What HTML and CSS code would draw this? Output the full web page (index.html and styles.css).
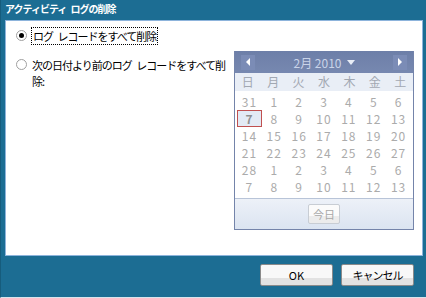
FILE: index.html
```html
<!DOCTYPE html>
<html lang="ja">
<head>
    <meta charset="UTF-8">
    <title>アクティビティ ログの削除</title>
    <link rel="stylesheet" href="styles.css">
</head>
<body>
    <div class="dialog">
        <div class="title">アクティビティ ログの削除</div>
        <div class="panel">
            <label class="option first">
                <span class="radio checked"></span>
                <span class="focus">ログ レコードをすべて削除</span>
            </label>
            <div class="row">
                <label class="option second">
                    <span class="radio"></span>
                    <span>次の日付より前のログ レコードをすべて削除:</span>
                </label>
                <div class="calendar">
                    <div class="cal-head">
                        <span class="nav"><svg width="6" height="8" viewBox="0 0 6 8"><path d="M5 0 L1 4 L5 8 Z" fill="#fff"/></svg></span>
                        <span class="month">2月 2010 <svg width="8" height="5" viewBox="0 0 8 5"><path d="M0 0 H8 L4 5 Z" fill="#e8edf6"/></svg></span>
                        <span class="nav"><svg width="6" height="8" viewBox="0 0 6 8"><path d="M1 0 L5 4 L1 8 Z" fill="#fff"/></svg></span>
                    </div>
                    <div class="days">
                        <span>日</span><span>月</span><span>火</span><span>水</span><span>木</span><span>金</span><span>土</span>
                    </div>
                    <div class="dates">
                        <span>31</span><span>1</span><span>2</span><span>3</span><span>4</span><span>5</span><span>6</span>
                        <span class="sel">7</span><span>8</span><span>9</span><span>10</span><span>11</span><span>12</span><span>13</span>
                        <span>14</span><span>15</span><span>16</span><span>17</span><span>18</span><span>19</span><span>20</span>
                        <span>21</span><span>22</span><span>23</span><span>24</span><span>25</span><span>26</span><span>27</span>
                        <span>28</span><span>1</span><span>2</span><span>3</span><span>4</span><span>5</span><span>6</span>
                        <span>7</span><span>8</span><span>9</span><span>10</span><span>11</span><span>12</span><span>13</span>
                    </div>
                    <div class="cal-foot">
                        <span class="today">今日</span>
                    </div>
                </div>
            </div>
        </div>
        <div class="buttons">
            <button class="btn">OK</button>
            <button class="btn jp">キャンセル</button>
        </div>
    </div>
</body>
</html>
```

FILE: styles.css
```css
body {
    margin: 0;
    font-family: "Noto Sans CJK JP", "DejaVu Sans", sans-serif;
    font-size: 11px;
}
.dialog {
    width: 426px;
    height: 298px;
    box-sizing: border-box;
    background-color: #1c6d93;
    border-left: 1px solid #165c7c;
    border-bottom: 1px solid #d8e4ec;
    display: flex;
    flex-direction: column;
}
.title {
    height: 20px;
    line-height: 18px;
    padding-left: 4px;
    color: #fff;
    font-weight: bold;
    font-size: 10px;
    letter-spacing: -1px;
    word-spacing: 3px;
}
.panel {
    margin: 0 3px 0 4px;
    height: 236px;
    box-sizing: border-box;
    background-color: #fff;
    border: 1px solid #8db4dc;
    padding: 6px 0 0 10px;
}
.option {
    display: flex;
    align-items: flex-start;
    gap: 5px;
    color: #000;
    line-height: 16px;
    letter-spacing: -1px;
    word-spacing: 3px;
}
.option.first {
    margin-top: 1px;
}
.focus {
    outline: 1px dotted #000;
    padding: 0 1px;
}
.radio {
    width: 11px;
    height: 11px;
    box-sizing: border-box;
    border-radius: 50%;
    border: 1px solid #a0a0a0;
    background: #fff;
    margin-top: 2px;
    flex: none;
    display: flex;
    align-items: center;
    justify-content: center;
}
.radio.checked::after {
    content: "";
    width: 5px;
    height: 5px;
    border-radius: 50%;
    background: #000;
}
.row {
    display: flex;
    margin-top: 7px;
}
.option.second {
    width: 212px;
    margin-top: 6px;
}
.calendar {
    margin-left: 6px;
    width: 178px;
    border: 1px solid #7484aa;
    border-top: none;
    background: #fff;
}
.cal-head {
    height: 22px;
    background: linear-gradient(#6d7fa8, #7788b0);
    display: flex;
    align-items: center;
    justify-content: space-between;
    padding: 0 6px;
}
.nav {
    width: 14px;
    height: 15px;
    background: #7b8cb6;
    display: flex;
    align-items: center;
    justify-content: center;
}
.month {
    color: #c9d3e8;
    font-size: 12px;
    display: flex;
    align-items: center;
    gap: 5px;
}
.days {
    display: grid;
    grid-template-columns: repeat(7, 1fr);
    background: #e9eef6;
    height: 18px;
    line-height: 18px;
    text-align: center;
    color: #a2a8b2;
    font-size: 12px;
}
.dates {
    display: grid;
    grid-template-columns: repeat(7, 1fr);
    grid-auto-rows: 17px;
    padding: 2px 2px 3px;
    text-align: center;
    color: #ababab;
    line-height: 17px;
    font-size: 12px;
    letter-spacing: 1px;
}
.dates .sel {
    background: #e3eaf5;
    border: 1px solid #c05050;
    line-height: 15px;
    color: #909090;
    font-weight: bold;
}
.cal-foot {
    height: 30px;
    background: linear-gradient(#edf1f8, #dbe4f1);
    border-top: 1px solid #b8c4d8;
    display: flex;
    align-items: center;
    justify-content: center;
}
.today {
    width: 30px;
    height: 18px;
    line-height: 18px;
    text-align: center;
    border: 1px solid #c8cdd4;
    border-radius: 2px;
    background: linear-gradient(#fbfbfb 60%, #ececec 60%);
    color: #a8a8a8;
}
.buttons {
    display: flex;
    justify-content: flex-end;
    gap: 8px;
    padding: 8px 12px 0 0;
}
.btn {
    width: 73px;
    height: 22px;
    font-family: inherit;
    font-size: 11px;
    border: 1px solid #8a8a8a;
    border-radius: 2px;
    background: linear-gradient(#f8f8f8 65%, #e2e2e2 65%);
    color: #000;
    padding: 0;
}
.btn.jp {
    letter-spacing: -1px;
}
```
